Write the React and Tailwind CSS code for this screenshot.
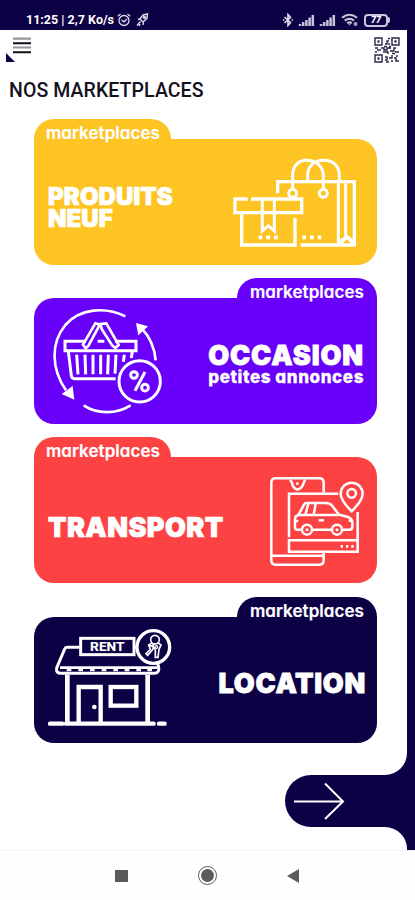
import React from 'react'

const ParcelIcon = () => (
    <svg width="126" height="92" viewBox="51 81 378 276" fill="none" stroke="#fff" strokeWidth="10">
        <path d="M188 190V155H418V345H257" />
        <path d="M370 155V345M392 160V322M380 345V330L397 320L412 332V345M374 342L396 322L416 342" strokeWidth="9" />
        <path d="M233 180V137C233 108 250 91 273 91C302 91 325 108 325 138V180" strokeWidth="9" />
        <path d="M278 155V137C278 108 297 91 327 91C355 91 373 108 373 138V155" strokeWidth="9" />
        <circle cx="233" cy="190" r="12" fill="#fec423" strokeWidth="9" />
        <circle cx="325" cy="190" r="12" fill="#fec423" strokeWidth="9" />
        <path d="M98 207H60V248H260V207H108" />
        <path d="M80 248V345H240V264" />
        <path d="M142 207V303L160 287L178 303V207" strokeWidth="9" />
        <path d="M131 322h11M154 322h11M177 322h11M262 322h11M285 322h11M308 322h11" strokeWidth="11" />
    </svg>
)

const BasketIcon = () => (
    <svg width="110" height="107" viewBox="81 96 330 321" fill="none" stroke="#fff" strokeWidth="7">
        <path d="M301 124C240 94 165 100 121 150C77 204 78 280 123 346" strokeWidth="8" />
        <path d="M176 391C216 418 274 418 317 391" strokeWidth="8" />
        <path d="M392 256C389 220 373 184 350 160" strokeWidth="8" />
        <path d="M333 144L369 154L340 181Z" fill="#fff" stroke="none" />
        <path d="M148 374L143 333L110 357Z" fill="#fff" stroke="none" />
        <path d="M182 199H120V227H333V199H270M218 199H238" strokeWidth="9" />
        <path d="M130 229L139 302Q140 311 149 311H272M322 229L319 249" strokeWidth="9" />
        <path d="M182 220L174 209L211 145L224 149L216 165L190 213Z" strokeWidth="8" />
        <path d="M271 219L281 210L244 145L227 147L230 162L262 212Z" strokeWidth="8" />
        <path d="M155 239L159 298M180 239L182 298M204 239V298M227 239V298M250 239L248 298M273 239L270 296M298 239L295 260" strokeWidth="9" />
        <circle cx="344" cy="319" r="62" fill="#6800fa" strokeWidth="9" />
        <circle cx="327" cy="300" r="10" strokeWidth="9" />
        <circle cx="360" cy="338" r="10" strokeWidth="9" />
        <path d="M360 291L330 347" strokeWidth="9" />
    </svg>
)

const CarPhoneIcon = () => (
    <svg width="96" height="93" viewBox="102 75 288 279" fill="none" stroke="#fff" strokeWidth="7.5">
        <path d="M266 128V98Q266 85 253 85H122Q109 85 109 98V331Q109 344 122 344H253Q266 344 266 331V307" />
        <path d="M109 317H266M164 90Q170 93 171 99Q174 115 187 119Q202 115 206 99Q207 93 212 90" />
        <circle cx="187" cy="101" r="4" fill="#fff" stroke="none" />
        <path d="M162 262V131H310M368 186V305H162V271H368" />
        <path d="M317 289h7M333 289h7M349 289h7" strokeWidth="8" />
        <path d="M350 184Q317 151 317 131A33 33 0 0 1 383 131Q383 151 350 184Z" />
        <circle cx="350" cy="130" r="13" />
        <path d="M201 239H185Q180 239 180 232V207Q180 197 190 195L207 164Q209 159 216 159H272Q286 159 292 168L312 194L339 201Q352 206 352 220V230Q352 239 343 239H322M230 239H291" />
        <path d="M190 195H312M220 162L211 194M242 162L236 194M251 211H267M181 213H190M341 212H352" />
        <circle cx="216" cy="239" r="15" fill="#fc4242" />
        <circle cx="306" cy="239" r="15" fill="#fc4242" />
        <path d="M212 239h8M302 239h8" />
    </svg>
)

const RentShopIcon = () => (
    <svg width="125" height="99" viewBox="66 117 375 297" fill="none" stroke="#fff" strokeWidth="9">
        <path d="M167 172H126Q121 172 119 177L95 234Q92 250 108 250H389Q404 248 401 232L398 219M327 172H337" />
        <path d="M105 233H397" strokeWidth="8" />
        <path d="M132 244V234M167 244V234M202 244V234M237 244V234M272 244V234M306 244V234M341 244V234M374 244V234" strokeWidth="14" />
        <rect x="167" y="145" width="160" height="49" />
        <path d="M127 254V397M368 254V397" strokeWidth="14" />
        <path d="M161 397V291H227V397" strokeWidth="13" />
        <rect x="257" y="291" width="77" height="56" strokeWidth="13" />
        <circle cx="208" cy="351" r="7" fill="#fff" stroke="none" />
        <path d="M75 401H112M123 401H386M402 401H419" strokeWidth="13" strokeLinecap="round" />
        <circle cx="385" cy="171" r="49" strokeWidth="10" />
        <circle cx="390" cy="149" r="13" strokeWidth="5" />
        <path d="M382 158L371 165L376 178L363 191L368 196L383 179L386 169M397 157L408 165L402 178L399 202H391V179L383 166L391 160M374 166L385 171" strokeWidth="5" />
        <circle cx="394" cy="171" r="4" strokeWidth="4" />
        <text x="247" y="183" textAnchor="middle" fill="#fff" stroke="none" fontSize="36" fontWeight="800" textLength="104" lengthAdjust="spacingAndGlyphs" fontFamily="Roboto, sans-serif">RENT</text>
    </svg>
)

const QrIcon = () => (
    <svg width="26" height="26" viewBox="0 0 26 26" fill="none" stroke="#2c2548" strokeWidth="1.4">
        <path d="M1 1h7v7h-7zM18 1h7v7h-7zM1 18h7v7h-7z" />
        <path d="M3.5 4.5h2M20.5 4.5h2M3.5 21.5h2" strokeWidth="2.4" />
        <path d="M11 7h2v-3h2M14 1.5h2M14 7h2M1 11h3M1 15h2M3 13h4M7 11h3v2h3v-2h4M9 15h5v2M16 14h4v-3h2M21 15h4M11 20h2v3h-2M12 25h3M15 21h3v-3M17 24h2M20 21h2v3h3M23 18v2M10 9.5h3M15 9.5h2M18 16.5h3" />
    </svg>
)

const SignalIcon = () => (
    <svg width="17" height="12" viewBox="0 0 17 12" stroke="#c9c5da" strokeWidth="2.5">
        <path d="M2 12V10M5.2 12V8M8.4 12V6M11.6 12V3.5M14.8 12V1" />
    </svg>
)

const StatusBar = () => (
    <div className="flex h-[30px] items-center bg-[#0e0044] pl-[26px] pr-[25px] pt-[10px] text-white">
        <span className="w-[91px] whitespace-nowrap font-[Roboto,sans-serif] text-[12.5px] font-bold leading-none">11:25 | 2,7 Ko/s</span>
        <svg width="14" height="14" viewBox="0 0 14 14" fill="none" stroke="#dedbe9" strokeWidth="1.3">
            <circle cx="7" cy="7.5" r="5" />
            <path d="M.8 3.2L3.5 1M13.2 3.2L10.5 1M4.5 7L7 8.8L10 6" />
        </svg>
        <svg className="ml-[5px]" width="13" height="14" viewBox="0 0 13 14" fill="none" stroke="#dedbe9" strokeWidth="1.4">
            <path d="M4 6L7 2L11.5 1L11 5.5L7 9ZM5 5.5L2 6.5M7.5 8.5L7 12M4.5 8.5L1 12.5M4 11L3 13" />
            <circle cx="8.5" cy="4.5" r="1" />
        </svg>
        <div className="ml-auto flex items-center">
            <svg width="12" height="14" viewBox="0 0 12 14" fill="none" stroke="#dedbe9" strokeWidth="1.6">
                <path d="M2.5 4L8.5 9.5L6 12.5V1.5L8.5 4.5L2.5 10M1 7h1.4M9.6 7h1.4" />
            </svg>
            <div className="ml-[4px] flex gap-[4px]">
                <SignalIcon />
                <SignalIcon />
            </div>
            <svg className="ml-[5px]" width="18" height="14" viewBox="0 0 18 14" fill="none" stroke="#c9c5da" strokeWidth="2">
                <path d="M1 4.7Q8.5-1.2 16 4.7M3.7 7.6Q8.5 3.8 13 7.6M6.2 10.2Q8.5 8.3 10.8 10.2" />
                <path d="M7 10.5h3L8.5 12.5Z" fill="#c9c5da" stroke="none" />
                <circle cx="14.5" cy="11" r="2" fill="#a7a1c3" stroke="none" />
            </svg>
            <div className="ml-[5px] flex h-[13px] w-[24px] items-center justify-center rounded-[4px] border-2 border-[#c9c5da] font-[Roboto,sans-serif] text-[9px] font-black italic leading-none">77</div>
            <div className="h-[6px] w-[2px] rounded-r bg-[#c9c5da]" />
        </div>
    </div>
)

const Card = ({ color, side, className = '', children }) => {
    const left = side === 'left'
    return (
        <div className={`flex h-[146px] w-[343px] flex-col ${className}`}>
            <div className={`relative z-10 flex h-5 ${left ? 'justify-start' : 'justify-end'}`}>
                <div className={`h-[21px] rounded-t-[20px] ${color} ${left ? 'w-[137px] pl-[12px]' : 'w-[140px] pl-[13px]'}`}>
                    <span className="block whitespace-nowrap pt-[4px] text-[17px] font-semibold leading-5 tracking-[0.06px] [-webkit-text-stroke:0.2px_white]">marketplaces</span>
                </div>
            </div>
            <div className={`flex h-[126px] justify-between rounded-b-[20px] ${color} ${left ? 'rounded-tr-[20px]' : 'rounded-tl-[20px]'}`}>
                {children}
            </div>
        </div>
    )
}

const App = () => {
    return (
        <div className="flex h-[900px] w-[415px] flex-col overflow-hidden bg-white">
            <StatusBar />
            <div className="flex h-[820px] bg-[#0e0044]">
                <main className="flex w-[407px] flex-col bg-white">
                    <header className="flex h-[41px] justify-between pl-[5px] pr-[7px] pt-[7px]">
                        <svg width="27" height="26" viewBox="0 0 27 26">
                            <path d="M8 1.7h18M8 10.5h18" stroke="#96949b" strokeWidth="2.2" />
                            <path d="M8 6.3h18M8 15.2h18" stroke="#111018" strokeWidth="2" />
                            <path d="M1 16V25H10Z" fill="#0e0044" />
                        </svg>
                        <QrIcon />
                    </header>
                    <h1 className="h-[48px] whitespace-nowrap pl-[9px] pt-[8px] font-[Roboto,sans-serif] text-[19.5px] font-medium leading-[23px] tracking-[0.08px] text-[#141021]">NOS MARKETPLACES</h1>

                    <div className="flex flex-col gap-[13px] pl-[34px] font-[Inter,sans-serif] text-white [font-feature-settings:'cv11']">
                        <Card color="bg-[#fec423]" side="left">
                            <h2 className="pl-[14px] pt-[47px] text-[24px] font-black leading-[22px] tracking-[0.05px] [-webkit-text-stroke:0.7px_white]">PRODUITS<br />NEUF</h2>
                            <div className="pr-[19px] pt-[18px]"><ParcelIcon /></div>
                        </Card>
                        <Card color="bg-[#6800fa]" side="right">
                            <div className="pl-[18px] pt-[9px]"><BasketIcon /></div>
                            <div className="pr-[13px] pt-[46px] text-right">
                                <h2 className="text-[27px] font-black leading-[23px] tracking-[0.9px] [-webkit-text-stroke:0.8px_white]">OCCASION</h2>
                                <p className="whitespace-nowrap text-[17px] font-extrabold leading-[20px] tracking-[0.6px] [-webkit-text-stroke:0.3px_white]">petites annonces</p>
                            </div>
                        </Card>
                        <Card color="bg-[#fc4242]" side="left">
                            <h2 className="pl-[14px] pt-[59px] text-[27px] font-black leading-[23px] tracking-[0.4px] [-webkit-text-stroke:0.7px_white]">TRANSPORT</h2>
                            <div className="pr-[12px] pt-[18px]"><CarPhoneIcon /></div>
                        </Card>
                        <Card color="bg-[#0e0044]" side="right" className="mt-px">
                            <div className="pl-[13px] pt-[12px]"><RentShopIcon /></div>
                            <h2 className="pr-[11px] pt-[55px] text-[27px] font-black leading-[23px] tracking-[0.7px] [-webkit-text-stroke:0.8px_white]">LOCATION</h2>
                        </Card>
                    </div>

                    <div className="mt-[10px] flex flex-col items-end">
                        <div className="h-[22px] w-[22px] bg-[#0e0044]">
                            <div className="h-full w-full rounded-br-[22px] bg-white" />
                        </div>
                        <button className="flex h-[52px] w-[122px] items-center rounded-l-full bg-[#0e0044] pl-[8px]">
                            <svg width="52" height="38" viewBox="0 0 52 38" fill="none" stroke="#fff" strokeWidth="2">
                                <path d="M1 19.5H50M32 1.5L50 19.5L32 37" />
                            </svg>
                        </button>
                        <div className="h-[23px] w-[22px] bg-[#0e0044]">
                            <div className="h-full w-full rounded-tr-[22px] bg-white" />
                        </div>
                    </div>
                </main>
            </div>
            <nav className="flex h-[50px] items-center border-t border-[#f2f2f2] bg-[#fefefe] pl-[115px]">
                <div className="h-[12px] w-[13px] bg-[#5b5b5b]" />
                <div className="ml-[70px] flex h-[19px] w-[19px] items-center justify-center rounded-full border border-[#5b5b5b]">
                    <div className="h-[13px] w-[13px] rounded-full bg-[#5b5b5b]" />
                </div>
                <svg className="ml-[70px]" width="12" height="14" viewBox="0 0 12 14">
                    <path d="M12 0V14L0 7Z" fill="#5b5b5b" />
                </svg>
            </nav>
        </div>
    )
}

export default App
